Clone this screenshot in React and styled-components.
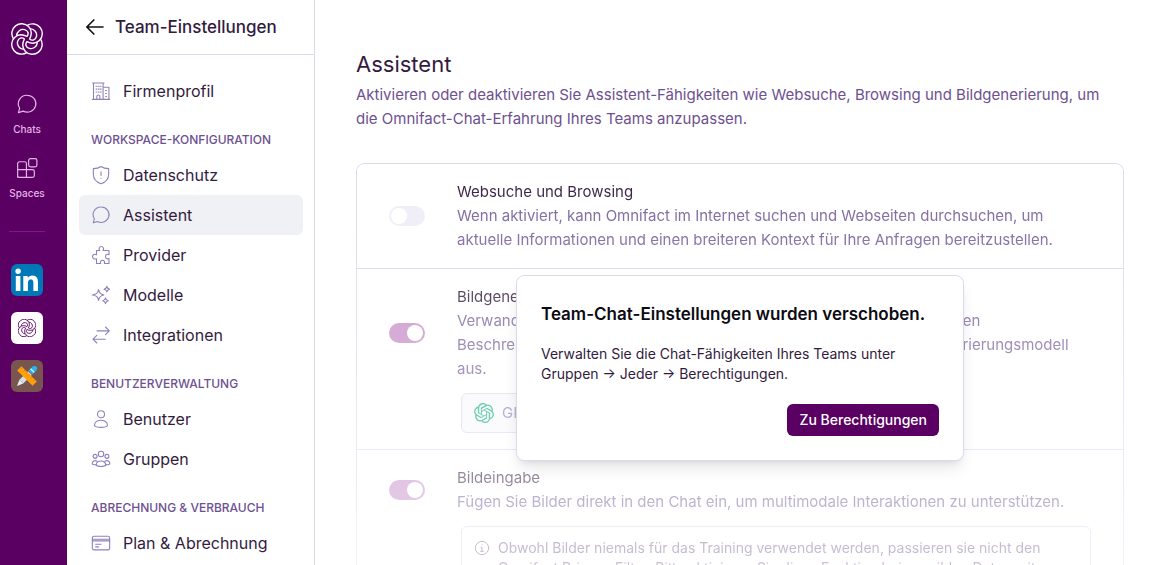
import React, { useState } from 'react';
import styled, { createGlobalStyle } from 'styled-components';

const GlobalStyle = createGlobalStyle`
* {
    box-sizing: border-box;
}
body {
    margin: 0;
    background: #fff;
    color: #331b40;
    font-family: Inter, "Liberation Sans", sans-serif;
    font-size: 15px;
    line-height: 24px;
    overflow: hidden;
}
h1, h2, h3, p, ul {
    margin: 0;
    padding: 0;
    font-weight: normal;
}
ul {
    list-style: none;
}
a {
    color: inherit;
    text-decoration: none;
}
button {
    font: inherit;
    border: 0;
    cursor: pointer;
}
`

const Page = styled.div`
    display: flex;
    height: 100vh;
    overflow: hidden;
`

/* ---------- rail ---------- */

const Rail = styled.nav`
    display: flex;
    flex-direction: column;
    align-items: center;
    flex: none;
    width: 67px;
    padding: 23px 13px 0 0;
    background: #5a0062;
    color: #e3b5e6;

    svg {
        display: block;
    }
`
const Logo = styled.a`
    color: #fff;
    margin-bottom: 38px;
`
const RailLink = styled.a`
    display: flex;
    flex-direction: column;
    align-items: center;
    gap: 7px;
    height: 64px;
    font-size: 10px;
    line-height: 14px;
    font-weight: 500;
`
const RailLine = styled.hr`
    width: 36px;
    margin: 10px 0 32px;
    border: 0;
    border-top: 1px solid #84138c;
`
const Tile = styled.a`
    display: flex;
    align-items: center;
    justify-content: center;
    width: 32px;
    height: 32px;
    margin-bottom: 16px;
    border-radius: 6px;
    background: ${props => props.$bg};
    color: #5a0062;
`

/* ---------- settings menu ---------- */

const Side = styled.aside`
    flex: none;
    width: 248px;
    border-right: 1px solid #dcd8ef;
`
const SideHead = styled.header`
    display: flex;
    align-items: center;
    gap: 10px;
    height: 55px;
    padding: 0 18px;
    border-bottom: 1px solid #dcd8ef;

    h2 {
        font-size: 17px;
        line-height: 28px;
        font-weight: 500;
    }
    a {
        display: flex;
        color: #111;
    }
`
const SideBody = styled.div`
    padding: 16px 11px 0 12px;
`
const Group = styled.h3`
    padding: 19px 12px 5px;
    font-size: 12px;
    line-height: 20px;
    font-weight: 500;
    color: #6d5091;
`
const Item = styled.a`
    display: flex;
    align-items: center;
    gap: 12px;
    height: 40px;
    padding: 0 12px;
    border-radius: 6px;
    font-size: 16px;
    background: ${props => props.$active ? '#f0f1f5' : 'transparent'};

    svg {
        color: #8f80ba;
    }
`

/* ---------- main ---------- */

const Main = styled.main`
    flex: 1;
    min-width: 0;
    padding: 48px 36px 0 41px;
`
const Title = styled.h1`
    font-size: 22px;
    line-height: 32px;
`
const Lead = styled.p`
    margin: 3px 0 32px;
    color: #6d5091;
`
const CardWrap = styled.div`
    position: relative;
`
const Card = styled.section`
    border: 1px solid #dcd8ef;
    border-radius: 8px;
    mask-image: linear-gradient(#000, transparent 660px);
`
const Row = styled.div`
    display: grid;
    grid-template-columns: 36px 1fr;
    column-gap: 32px;
    align-items: center;
    padding: 16px 32px;

    & + & {
        border-top: 1px solid #dcd8ef;
    }
    label {
        display: block;
    }
    p {
        color: #7b639c;
    }
`
const Extra = styled.div`
    grid-column: 2;
    padding: 12px 0 0 4px;
`
const Switch = styled.input`
    appearance: none;
    display: block;
    width: 36px;
    height: 20px;
    margin: 0;
    padding: 2px;
    border-radius: 10px;
    background: #efedf8;

    &::before {
        content: '';
        display: block;
        width: 16px;
        height: 16px;
        border-radius: 50%;
        background: #fff;
    }
    &:checked {
        background: #c78fc9;
    }
    &:checked::before {
        margin-left: 16px;
    }
`
const ModelButton = styled.button`
    display: flex;
    align-items: center;
    gap: 8px;
    height: 40px;
    padding: 0 12px;
    border: 1px solid #dcd8ef;
    border-radius: 6px;
    background: #f8f8fc;
    color: #8f80ba;

    svg {
        color: #10b078;
    }
`
const Note = styled.div`
    display: flex;
    gap: 8px;
    padding: 11px 12px;
    border: 1px solid #dcd8ef;
    border-radius: 6px;
    font-size: 14px;
    line-height: 20px;
    color: #7b5c91;

    svg {
        flex: none;
        margin: 2px 0;
    }
`
const Dialog = styled.div`
    position: absolute;
    top: 112px;
    left: 50%;
    width: 448px;
    padding: 24px;
    border: 1px solid #dcd8ef;
    border-radius: 8px;
    background: #fff;
    box-shadow: 0 10px 15px -3px rgba(0, 0, 0, .1), 0 4px 6px -4px rgba(0, 0, 0, .1);
    transform: translateX(-50%);
    font-size: 14px;
    line-height: 20px;

    h2 {
        margin-bottom: 16px;
        font-size: 17px;
        line-height: 28px;
        font-weight: 600;
        color: #0c0a12;
    }
`
const DialogFoot = styled.div`
    display: flex;
    justify-content: flex-end;
    margin-top: 20px;
`
const Primary = styled.button`
    height: 32px;
    padding: 0 12px;
    border-radius: 6px;
    background: #5a0062;
    color: #fff;
    font-weight: 500;
`

/* ---------- icons ---------- */

const Icon = ({ size = 20, stroke = 1.3, children }) => (
    <svg width={size} height={size} viewBox='0 0 24 24' fill='none' stroke='currentColor'
        strokeWidth={stroke} strokeLinecap='round' strokeLinejoin='round' aria-hidden='true'>
        {children}
    </svg>
)

// interlaced ribbon, repeated every quarter turn
const Knot = ({ size, stroke }) => (
    <svg width={size} height={size} viewBox='0 0 32 32' fill='none' stroke='currentColor' strokeWidth={stroke} aria-hidden='true'>
        {[0, 90, 180, 270].map(deg => (
            <path key={deg} transform={`rotate(${deg} 16 16)`}
                d='M2.4 15.8 A9.8 9.8 0 0 1 17.6 3.6 C20.8 7 21 11.4 18.6 16 M5.6 12.6 C6 8.6 9.6 5.6 13.6 6.6 C17 7.4 18.2 10.6 16 13.6' />
        ))}
    </svg>
)

const ChatPath = () => <path d='M12.4 2.5 a9.4 9.2 0 1 1 -4.6 17.3 L2.7 21.4 L4 16.6 A9.3 9.2 0 0 1 12.4 2.5z' />

const icons = {
    company: <>
        <path d='M3 22 V2.4 H14.5 V22 M14.5 7.5 H21.5 V22 M1.6 22 H22.4 M1.8 2.4 H15.7' />
        <path d='M7 22 V18.6 a1.8 1.8 0 0 1 3.6 0 V22' />
        <path d='M6 6.2h1 M8.7 6.2h1 M11.2 6.2h1 M6 9.7h1 M8.7 9.7h1 M11.2 9.7h1 M6 13.2h1 M8.7 13.2h1 M11.2 13.2h1 M17.6 11.5h1 M17.6 15h1 M17.6 18.5h1' />
    </>,
    shield: <>
        <path d='M12 1.8 C9.4 3.6 6.2 4.3 2.8 4.3 V11 C2.8 16.6 6.5 20.6 12 22.4 C17.5 20.6 21.2 16.6 21.2 11 V4.3 C17.8 4.3 14.6 3.6 12 1.8z' />
        <path d='M12 8 V12.6 M12 15.8 V16' />
    </>,
    chat: <ChatPath />,
    puzzle: <path d='M6.6 6.6 H10.4 C9.2 4.6 9.8 1.8 12.4 1.8 C15 1.8 15.6 4.6 14.4 6.6 H21.6 V11.6 C19.6 10.6 17.4 11.6 17.4 13.9 C17.4 16.2 19.6 17.2 21.6 16.2 V22.2 H16 C16.8 20.2 15.8 18.2 13.8 18.2 C11.8 18.2 10.8 20.2 11.6 22.2 H6.6 V16.4 C4.6 17.4 1.8 16.6 1.8 14 C1.8 11.4 4.6 10.6 6.6 11.6z' />,
    sparkles: <>
        <path d='M9 5.6 C9.8 9.8 11.2 11.2 15.4 12 C11.2 12.8 9.8 14.2 9 18.4 C8.2 14.2 6.8 12.8 1.6 12 C6.8 11.2 8.2 9.8 9 5.6z' />
        <path d='M19 1.6 C19.4 4 20 4.6 22.4 5 C20 5.4 19.4 6 19 8.4 C18.6 6 18 5.4 15.6 5 C18 4.6 18.6 4 19 1.6z' />
        <path d='M17.4 15.4 C17.8 17.9 18.4 18.5 20.8 18.9 C18.4 19.3 17.8 19.9 17.4 22.4 C17 19.9 16.4 19.3 14 18.9 C16.4 18.5 17 17.9 17.4 15.4z' />
    </>,
    arrows: <>
        <path d='M7.2 7 H22 M17.4 2.4 L22 7 L17.4 11.6' />
        <path d='M17.2 17 H2.4 M7 12.4 L2.4 17 L7 21.6' />
    </>,
    user: <>
        <circle cx='12' cy='6.2' r='4.2' />
        <path d='M4.2 19.8 C4.2 11.4 19.8 11.4 19.8 19.8 C18 22.8 6 22.8 4.2 19.8z' />
    </>,
    users: <>
        <circle cx='12' cy='6' r='3.3' />
        <circle cx='4.9' cy='8.8' r='2.4' />
        <circle cx='19.1' cy='8.8' r='2.4' />
        <path d='M6.2 19.4 C6.2 12.6 17.8 12.6 17.8 19.4 C16.4 21.4 7.6 21.4 6.2 19.4z' />
        <path d='M7.4 14.6 C4.6 13 1.4 14.4 1.4 17.8 C2.4 18.8 4.2 19 6.2 18.6 M16.6 14.6 C19.4 13 22.6 14.4 22.6 17.8 C21.6 18.8 19.8 19 17.8 18.6' />
    </>,
    card: <>
        <rect x='1.6' y='3.8' width='20.8' height='16.4' rx='2' />
        <path d='M1.6 7.4 H22.4 M1.6 9.4 H22.4 M5.6 13.4 H12 M5.6 16.6 H9.2' />
    </>,
}

const LinkedIn = () => (
    <svg width='32' height='32' viewBox='0 0 32 32' fill='#fff' aria-hidden='true'>
        <circle cx='7.1' cy='7.3' r='2.7' />
        <path d='M4.8 12 H9.4 V27 H4.8z M12.3 12 H16.7 V14 C17.6 12.5 19.2 11.6 21.3 11.6 C25.8 11.6 27 14.6 27 18.6 V27 H22.4 V19.6 C22.4 17.6 22.2 15.6 19.8 15.6 C17.4 15.6 16.9 17.4 16.9 19.4 V27 H12.3z' />
    </svg>
)

const Tools = () => (
    <svg width='22' height='22' viewBox='0 0 22 22' aria-hidden='true'>
        <path d='M1 21 L3.4 14.8 L7.2 18.6z' fill='#e8eef2' />
        <path d='M3.4 14.8 L12 6.2 L15.8 10 L7.2 18.6z' fill='#d5dde2' />
        <path d='M12.6 5.6 L16 2.2 C17 .8 19 .4 20.4 1.6 C21.6 3 21.2 5 19.8 6 L16.4 9.4z' fill='#29b6f0' />
        <path d='M14.6 3.8 L18.2 7.4' stroke='#e8eef2' strokeWidth='1.3' />
        <path d='M1.2 5.4 L5.4 1.2 L20.8 16.6 L16.6 20.8z' fill='#ff9f0a' />
        <path d='M6.6 2.6 L5.2 4 M9 5 L7.6 6.4 M11.4 7.4 L10 8.8 M13.8 9.8 L12.4 11.2 M16.2 12.2 L14.8 13.6 M18.6 14.6 L17.2 16' stroke='#d87400' strokeWidth='.8' />
    </svg>
)

// hexagonal flower mark, six segments
const OpenAI = () => (
    <svg width='20' height='20' viewBox='0 0 24 24' fill='currentColor' aria-hidden='true'>
        <path d='M22.28 9.82a5.98 5.98 0 0 0-.52-4.91 6.05 6.05 0 0 0-6.51-2.9A6.07 6.07 0 0 0 4.98 4.18a5.98 5.98 0 0 0-4 2.9 6.05 6.05 0 0 0 .74 7.1 5.98 5.98 0 0 0 .51 4.91 6.05 6.05 0 0 0 6.51 2.9A5.98 5.98 0 0 0 13.26 24a6.06 6.06 0 0 0 5.77-4.21 5.99 5.99 0 0 0 4-2.9 6.06 6.06 0 0 0-.75-7.07zm-9.02 12.61a4.48 4.48 0 0 1-2.88-1.04l.14-.08 4.78-2.76a.8.8 0 0 0 .39-.68v-6.74l2.02 1.17a.07.07 0 0 1 .04.05v5.58a4.5 4.5 0 0 1-4.49 4.5zM3.6 18.3a4.47 4.47 0 0 1-.53-3.01l.14.08 4.78 2.76a.77.77 0 0 0 .78 0l5.84-3.37v2.33a.08.08 0 0 1-.03.06L9.74 19.95A4.5 4.5 0 0 1 3.6 18.3zM2.34 7.9a4.49 4.49 0 0 1 2.37-1.98V11.6a.77.77 0 0 0 .39.68l5.81 3.35-2.02 1.17a.08.08 0 0 1-.07 0l-4.83-2.79A4.5 4.5 0 0 1 2.34 7.87zm16.6 3.86L13.1 8.36l2.02-1.16a.08.08 0 0 1 .07 0l4.83 2.79a4.49 4.49 0 0 1-.68 8.1v-5.67a.79.79 0 0 0-.4-.66zm2.01-3.03-.14-.08-4.77-2.78a.78.78 0 0 0-.79 0L9.41 9.23V6.9a.07.07 0 0 1 .03-.06l4.83-2.79a4.5 4.5 0 0 1 6.68 4.66zM8.31 12.86l-2.02-1.16a.08.08 0 0 1-.04-.06V6.07a4.5 4.5 0 0 1 7.38-3.45l-.14.08L8.7 5.46a.8.8 0 0 0-.39.68zm1.1-2.36L12 9l2.61 1.5v3L12 15l-2.6-1.5z' />
    </svg>
)

const menu = [
    { items: [['company', 'Firmenprofil']] },
    {
        title: 'WORKSPACE-KONFIGURATION',
        items: [['shield', 'Datenschutz'], ['chat', 'Assistent'], ['puzzle', 'Provider'], ['sparkles', 'Modelle'], ['arrows', 'Integrationen']],
    },
    { title: 'BENUTZERVERWALTUNG', items: [['user', 'Benutzer'], ['users', 'Gruppen']] },
    { title: 'ABRECHNUNG & VERBRAUCH', items: [['card', 'Plan & Abrechnung']] },
]

const Setting = ({ id, title, text, defaultOn, children }) => {
    const [on, setOn] = useState(defaultOn)
    return (
        <Row>
            <Switch type='checkbox' role='switch' id={id} checked={on} onChange={e => setOn(e.target.checked)} />
            <div>
                <label htmlFor={id}>{title}</label>
                <p>{text}</p>
            </div>
            {children ? <Extra>{children}</Extra> : null}
        </Row>
    )
}

const App = () => {
    return (
        <Page>
            <GlobalStyle />
            <Rail>
                <Logo href='#' aria-label='Omnifact'><Knot size={32} stroke={1.4} /></Logo>
                <RailLink href='#chats'>
                    <Icon size={22}><ChatPath /></Icon>
                    Chats
                </RailLink>
                <RailLink href='#spaces'>
                    <Icon size={22}>
                        <path d='M1.8 22.2 V7.2 a2 2 0 0 1 2 -2 H9.4 a2 2 0 0 1 2 2 V22.2 M1.8 13.8 H18 a2 2 0 0 1 2 2 V20.2 a2 2 0 0 1 -2 2 H3.8 a2 2 0 0 1 -2 -2' />
                        <rect x='13.8' y='1.8' width='9' height='9' rx='2' />
                    </Icon>
                    Spaces
                </RailLink>
                <RailLine />
                <Tile href='#linkedin' $bg='#0077b7' aria-label='LinkedIn'><LinkedIn /></Tile>
                <Tile href='#omnifact' $bg='#fff' aria-label='Omnifact Space'><Knot size={18} stroke={1.6} /></Tile>
                <Tile href='#design' $bg='#795550' aria-label='Design'><Tools /></Tile>
            </Rail>

            <Side>
                <SideHead>
                    <a href='#back' aria-label='Zurück'>
                        <Icon stroke={2}><path d='M21.6 12 H2.4 M10.6 3.6 L2.2 12 L10.6 20.4' /></Icon>
                    </a>
                    <h2>Team-Einstellungen</h2>
                </SideHead>
                <SideBody>
                    {menu.map((group, i) => (
                        <div key={i}>
                            {group.title ? <Group>{group.title}</Group> : null}
                            <ul>
                                {group.items.map(([icon, label]) => (
                                    <li key={label}>
                                        <Item href={'#' + icon} $active={icon === 'chat'}>
                                            <Icon>{icons[icon]}</Icon>
                                            {label}
                                        </Item>
                                    </li>
                                ))}
                            </ul>
                        </div>
                    ))}
                </SideBody>
            </Side>

            <Main>
                <Title>Assistent</Title>
                <Lead>
                    Aktivieren oder deaktivieren Sie Assistent-Fähigkeiten wie Websuche, Browsing und Bildgenerierung, um die Omnifact-Chat-Erfahrung Ihres Teams anzupassen.
                </Lead>
                <CardWrap>
                    <Card>
                        <Setting id='web' title='Websuche und Browsing' defaultOn={false}
                            text='Wenn aktiviert, kann Omnifact im Internet suchen und Webseiten durchsuchen, um aktuelle Informationen und einen breiteren Kontext für Ihre Anfragen bereitzustellen.' />
                        <Setting id='image' title='Bildgenerierung' defaultOn={true}
                            text='Verwandeln Sie Ihre Ideen direkt in beeindruckende Bilder mit detaillierten Beschreibungen und wählen Sie hier unten Ihr bevorzugtes KI-Bildgenerierungsmodell aus.'>
                            <ModelButton type='button'><OpenAI />GPT</ModelButton>
                        </Setting>
                        <Setting id='vision' title='Bildeingabe' defaultOn={true}
                            text='Fügen Sie Bilder direkt in den Chat ein, um multimodale Interaktionen zu unterstützen.'>
                            <Note>
                                <Icon size={16} stroke={1.5}>
                                    <circle cx='12' cy='12' r='10' />
                                    <path d='M10.5 11 H12 V17 M10 17 H14 M12 7.2 V7.4' />
                                </Icon>
                                <span>Obwohl Bilder niemals für das Training verwendet werden, passieren sie nicht den Omnifact Privacy Filter. Bitte aktivieren Sie diese Funktion bei sensiblen Daten mit Vorsicht.</span>
                            </Note>
                        </Setting>
                    </Card>
                    <Dialog role='dialog' aria-labelledby='moved'>
                        <h2 id='moved'>Team-Chat-Einstellungen wurden verschoben.</h2>
                        <p>Verwalten Sie die Chat-Fähigkeiten Ihres Teams unter Gruppen → Jeder → Berechtigungen.</p>
                        <DialogFoot>
                            <Primary type='button'>Zu Berechtigungen</Primary>
                        </DialogFoot>
                    </Dialog>
                </CardWrap>
            </Main>
        </Page>
    );
};

export default App;
